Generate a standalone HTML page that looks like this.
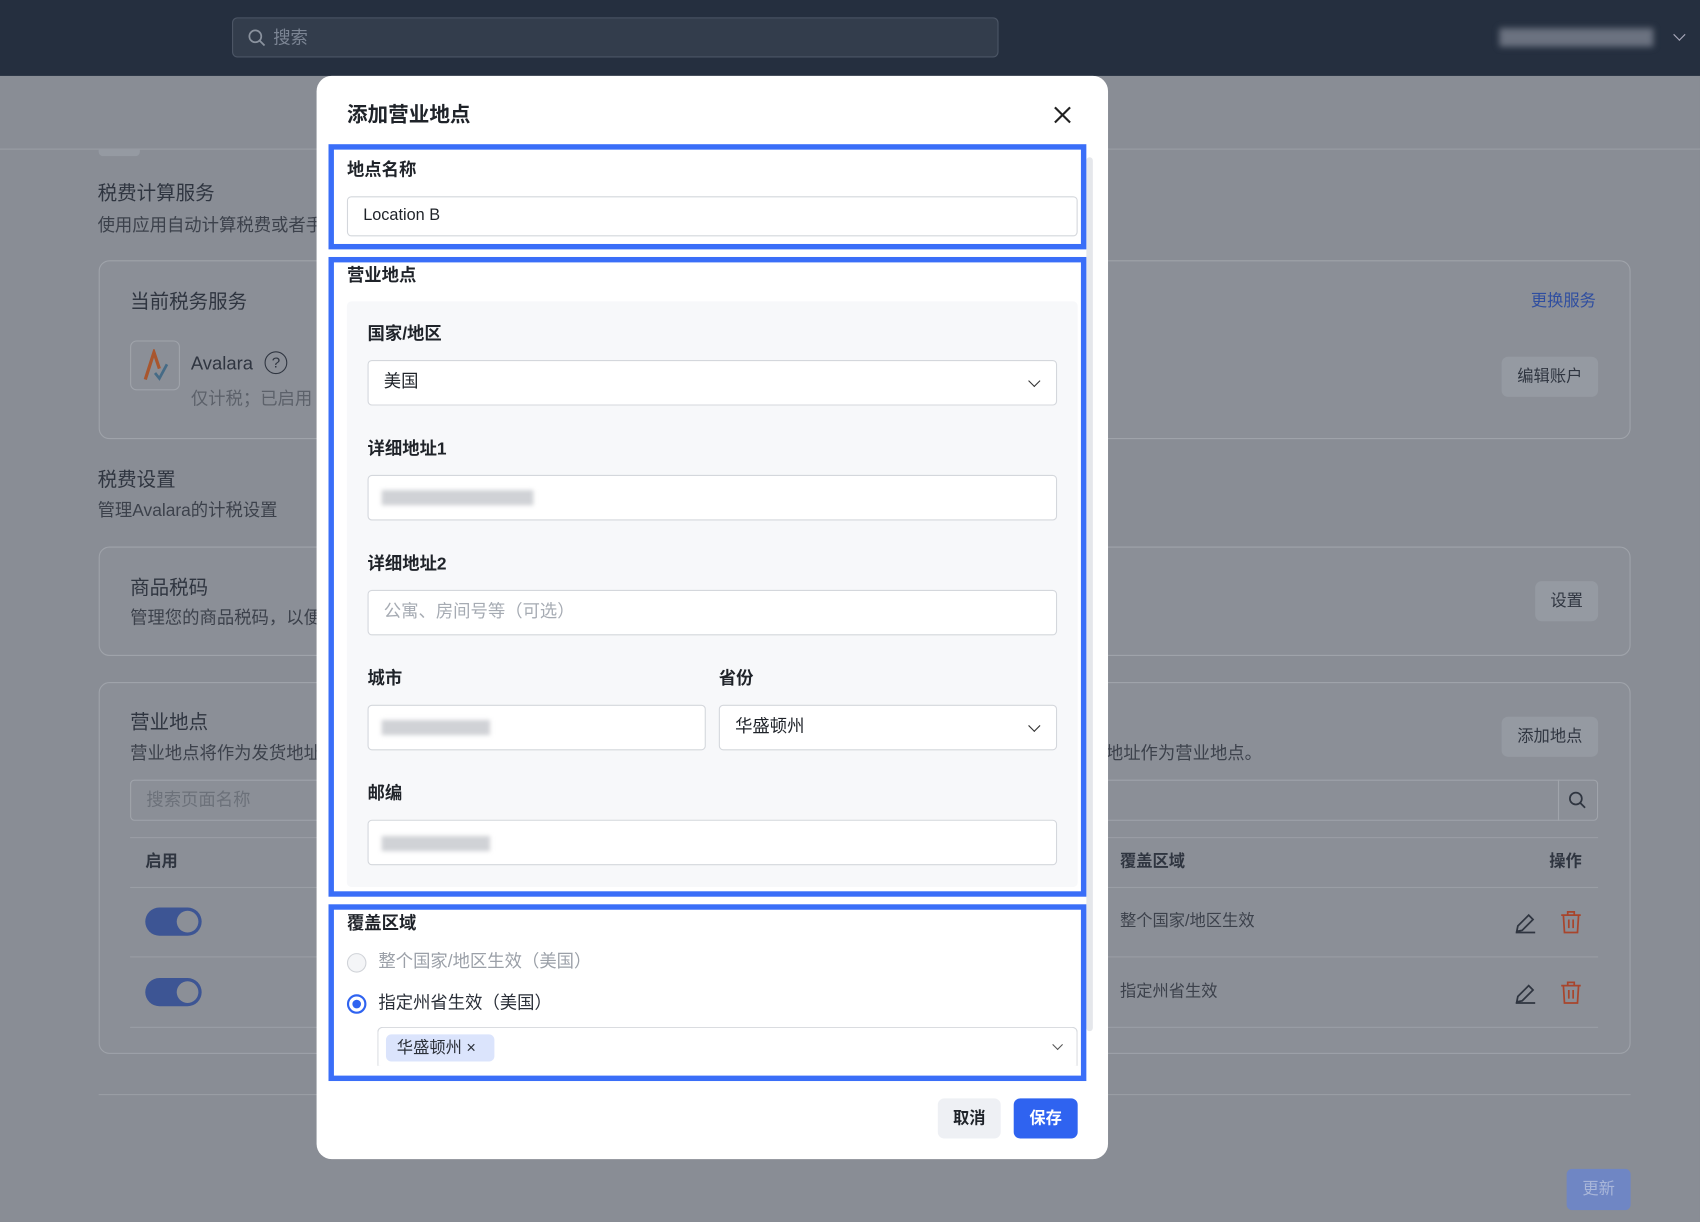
<!DOCTYPE html>
<html><head><meta charset="utf-8"><style>
*{box-sizing:border-box;margin:0;padding:0}
html,body{width:1700px;height:1222px;overflow:hidden;background:#898d95}
#w{position:absolute;left:0;top:0;width:1568px;height:1127px;transform:scale(1.08418,1.08429);transform-origin:0 0;font-family:"Liberation Sans","Noto Sans CJK SC",sans-serif;background:#898d95;color:#2a2f38;line-height:1.36}
.a{position:absolute}
.bt{color:#2f3540;font-size:18px}
.st{color:#3c414b;font-size:16px}
.card{position:absolute;border:1px solid #9fa3aa;border-radius:10px;background:#8b8f97}
.gbtn{position:absolute;background:#959aa2;border-radius:6px;color:#2f3540;font-size:15px;text-align:center}
.tog{position:absolute;width:52px;height:26px;border-radius:13px;background:#3d5594}
.tog::after{content:"";position:absolute;right:3px;top:3px;width:20px;height:20px;border-radius:50%;background:#8b8f97}
.m{position:absolute;left:292px;top:70px;width:730px;height:999px;background:#fff;border-radius:14px}
.box{position:absolute;border:5px solid #3a6ef8}
.lb{position:absolute;font-size:16px;font-weight:bold;color:#1f2329}
.in{position:absolute;background:#fff;border:1px solid #d4d7dc;border-radius:4px;font-size:16px;color:#1f2329;padding-left:14px;display:flex;align-items:center}
.chev{position:absolute;right:16px;top:50%;width:8px;height:8px;border-right:1.6px solid #333;border-bottom:1.6px solid #333;transform:translateY(-70%) rotate(45deg)}
.blur{position:absolute;background:#d0d2d6;filter:blur(2px);height:14px}
</style></head><body><div id="w">
<div class="a" style="left:0;top:0;width:1568px;height:70px;background:#252f3f"></div>
<div class="a" style="left:214px;top:16px;width:707px;height:37px;background:#333d4c;border:1px solid #4c5666;border-radius:5px"></div>
<svg class="a" style="left:228px;top:26px" width="18" height="18" viewBox="0 0 18 18"><circle cx="7.5" cy="7.5" r="5.5" fill="none" stroke="#8a929e" stroke-width="1.6"/><path d="M11.5 11.5L16 16" stroke="#8a929e" stroke-width="1.6"/></svg>
<div class="a" style="left:252px;top:25px;font-size:16px;color:#7c8594">搜索</div>
<div class="a" style="left:1383px;top:26px;width:142px;height:17px;background:#6b7280;filter:blur(3px)"></div>
<div class="a" style="left:1545px;top:28px;width:8px;height:8px;border-right:1.5px solid #aab;border-bottom:1.5px solid #aab;transform:rotate(45deg)"></div>
<div class="a" style="left:0;top:137px;width:1568px;height:1px;background:#9a9ea5"></div>
<div class="a" style="left:91px;top:138px;width:38px;height:6px;background:#959aa2;border-radius:0 0 4px 4px"></div>
<div class="a bt" style="left:90px;top:166px">税费计算服务</div>
<div class="a st" style="left:90px;top:198px">使用应用自动计算税费或者手</div>
<div class="card" style="left:91px;top:240px;width:1413px;height:165px"></div>
<div class="a bt" style="left:120px;top:266px">当前税务服务</div>
<div class="a" style="left:1412px;top:268px;font-size:15px;color:#2f4ea0">更换服务</div>
<div class="a" style="left:120px;top:314px;width:46px;height:46px;border:1px solid #a0a4ab;border-radius:6px"></div>
<svg class="a" style="left:131px;top:322px" width="26" height="30" viewBox="0 0 26 30"><path d="M3 28L11 3L16 18" fill="none" stroke="#a8562e" stroke-width="3"/><path d="M12 22L16 27L23 14" fill="none" stroke="#466b86" stroke-width="2.5"/></svg>
<div class="a" style="left:176px;top:324px;font-size:17px;color:#2f3540">Avalara</div>
<div class="a" style="left:244px;top:324px;width:21px;height:21px;border:1.6px solid #2f3540;border-radius:50%;font-size:14px;text-align:center;line-height:18px;color:#2f3540">?</div>
<div class="a st" style="left:176px;top:358px;color:#5c616a">仅计税；已启用</div>
<div class="gbtn" style="left:1385px;top:329px;width:89px;height:37px;line-height:37px">编辑账户</div>
<div class="a bt" style="left:90px;top:430px">税费设置</div>
<div class="a st" style="left:90px;top:461px">管理Avalara的计税设置</div>
<div class="card" style="left:91px;top:504px;width:1413px;height:101px"></div>
<div class="a bt" style="left:120px;top:530px">商品税码</div>
<div class="a st" style="left:120px;top:560px">管理您的商品税码，以便</div>
<div class="gbtn" style="left:1416px;top:536px;width:58px;height:37px;line-height:37px">设置</div>
<div class="card" style="left:91px;top:629px;width:1413px;height:343px"></div>
<div class="a bt" style="left:120px;top:654px">营业地点</div>
<div class="a st" style="left:120px;top:685px">营业地点将作为发货地址</div>
<div class="a st" style="left:1020px;top:685px">地址作为营业地点。</div>
<div class="gbtn" style="left:1385px;top:661px;width:89px;height:37px;line-height:37px">添加地点</div>
<div class="a" style="left:120px;top:719px;width:1318px;height:38px;border:1px solid #a0a4ab;border-radius:4px 0 0 4px"></div>
<div class="a st" style="left:135px;top:728px;color:#6c717a">搜索页面名称</div>
<div class="a" style="left:1437px;top:719px;width:37px;height:38px;border:1px solid #a0a4ab;border-radius:0 4px 4px 0"></div>
<svg class="a" style="left:1446px;top:729px" width="18" height="18" viewBox="0 0 18 18"><circle cx="7.5" cy="7.5" r="5.5" fill="none" stroke="#2f3540" stroke-width="1.6"/><path d="M11.5 11.5L16 16" stroke="#2f3540" stroke-width="1.6"/></svg>
<div class="a" style="left:120px;top:772px;width:1354px;height:1px;background:#9a9ea5"></div>
<div class="a" style="left:120px;top:818px;width:1354px;height:1px;background:#9a9ea5"></div>
<div class="a" style="left:120px;top:882px;width:1354px;height:1px;background:#9a9ea5"></div>
<div class="a" style="left:120px;top:947px;width:1354px;height:1px;background:#9a9ea5"></div>
<div class="a" style="left:134px;top:785px;font-size:15px;font-weight:bold;color:#2f3540">启用</div>
<div class="a" style="left:1033px;top:785px;font-size:15px;font-weight:bold;color:#2f3540">覆盖区域</div>
<div class="a" style="left:1429px;top:785px;font-size:15px;font-weight:bold;color:#2f3540">操作</div>
<div class="tog" style="left:134px;top:837px"></div>
<div class="tog" style="left:134px;top:902px"></div>
<div class="a" style="left:1033px;top:840px;font-size:15px;color:#3c414b">整个国家/地区生效</div>
<div class="a" style="left:1033px;top:905px;font-size:15px;color:#3c414b">指定州省生效</div>
<svg class="a" style="left:1395px;top:839px" width="24" height="24" viewBox="0 0 24 24"><path d="M4 20L5 15L15 5L19 9L9 19Z M3 21H21" fill="none" stroke="#2f3540" stroke-width="1.6"/></svg>
<svg class="a" style="left:1437px;top:839px" width="24" height="24" viewBox="0 0 24 24"><path d="M3 5H21M9 5V2H15V5M5 5L6 21H18L19 5M10 9V17M14 9V17" fill="none" stroke="#a8452c" stroke-width="1.6"/></svg>
<svg class="a" style="left:1395px;top:904px" width="24" height="24" viewBox="0 0 24 24"><path d="M4 20L5 15L15 5L19 9L9 19Z M3 21H21" fill="none" stroke="#2f3540" stroke-width="1.6"/></svg>
<svg class="a" style="left:1437px;top:904px" width="24" height="24" viewBox="0 0 24 24"><path d="M3 5H21M9 5V2H15V5M5 5L6 21H18L19 5M10 9V17M14 9V17" fill="none" stroke="#a8452c" stroke-width="1.6"/></svg>
<div class="a" style="left:91px;top:1009px;width:1413px;height:1px;background:#9a9ea5"></div>
<div class="a" style="left:1445px;top:1078px;width:59px;height:38px;background:#6f86c4;border-radius:5px;color:#a9b6d9;font-size:15px;text-align:center;line-height:38px">更新</div>

<div class="m">
  <div class="a" style="left:28px;top:24px;font-size:19px;font-weight:bold;color:#1f2329">添加营业地点</div>
  <svg class="a" style="left:678px;top:26px" width="20" height="20" viewBox="0 0 20 20"><path d="M3 3L17 17M17 3L3 17" stroke="#222" stroke-width="2"/></svg>
  <div class="a" style="left:710px;top:75px;width:6px;height:806px;background:#e5e7eb;border-radius:3px"></div>
  <div class="box" style="left:11px;top:63px;width:699px;height:97px"></div>
  <div class="lb" style="left:28px;top:77px">地点名称</div>
  <div class="in" style="left:28px;top:111px;width:674px;height:37px;font-size:15px">Location B</div>

  <div class="box" style="left:11px;top:167px;width:699px;height:590px"></div>
  <div class="lb" style="left:28px;top:174px">营业地点</div>
  <div class="a" style="left:28px;top:208px;width:674px;height:540px;background:#f7f8fa;border-radius:4px"></div>
  <div class="lb" style="left:47px;top:228px">国家/地区</div>
  <div class="in" style="left:47px;top:262px;width:636px;height:42px">美国<span class="chev"></span></div>
  <div class="lb" style="left:47px;top:334px">详细地址1</div>
  <div class="in" style="left:47px;top:368px;width:636px;height:42px"><span class="blur" style="left:12px;top:13px;width:140px"></span></div>
  <div class="lb" style="left:47px;top:440px">详细地址2</div>
  <div class="in" style="left:47px;top:474px;width:636px;height:42px;color:#a6abb3">公寓、房间号等（可选）</div>
  <div class="lb" style="left:47px;top:546px">城市</div>
  <div class="lb" style="left:371px;top:546px">省份</div>
  <div class="in" style="left:47px;top:580px;width:312px;height:42px"><span class="blur" style="left:12px;top:13px;width:100px"></span></div>
  <div class="in" style="left:371px;top:580px;width:312px;height:42px">华盛顿州<span class="chev"></span></div>
  <div class="lb" style="left:47px;top:652px">邮编</div>
  <div class="in" style="left:47px;top:686px;width:636px;height:42px"><span class="blur" style="left:12px;top:14px;width:100px"></span></div>

  <div class="box" style="left:11px;top:764px;width:699px;height:163px"></div>
  <div class="lb" style="left:28px;top:772px">覆盖区域</div>
  <div class="a" style="left:28px;top:809px;width:18px;height:18px;border:1.5px solid #d0d3d8;border-radius:50%;background:#f4f5f7"></div>
  <div class="a" style="left:57px;top:807px;font-size:16px;color:#9ba0a8">整个国家/地区生效（美国）</div>
  <div class="a" style="left:28px;top:847px;width:18px;height:18px;border:2px solid #2f63f0;border-radius:50%"></div>
  <div class="a" style="left:33px;top:852px;width:8px;height:8px;background:#2f63f0;border-radius:50%"></div>
  <div class="a" style="left:57px;top:845px;font-size:16px;color:#2a2f38">指定州省生效（美国）</div>
  <div class="a" style="left:56px;top:877px;width:646px;height:36px;border:1px solid #d4d7dc;border-bottom:none;border-radius:5px 5px 0 0"></div>
  <div class="a" style="left:64px;top:884px;width:100px;height:25px;background:#dbe4fc;border-radius:5px;font-size:15px;color:#2a2f38;padding-left:10px;line-height:25px">华盛顿州 ×</div>
  <div class="a" style="left:680px;top:890px;width:7px;height:7px;border-right:1.3px solid #555;border-bottom:1.3px solid #555;transform:rotate(45deg)"></div>

  <div class="a" style="left:573px;top:943px;width:58px;height:37px;background:#eef0f4;border-radius:6px;font-size:15px;font-weight:bold;text-align:center;line-height:37px;color:#1f2329">取消</div>
  <div class="a" style="left:643px;top:943px;width:59px;height:37px;background:#2f63f0;border-radius:6px;font-size:15px;font-weight:bold;text-align:center;line-height:37px;color:#fff">保存</div>
</div>
</div></body></html>
